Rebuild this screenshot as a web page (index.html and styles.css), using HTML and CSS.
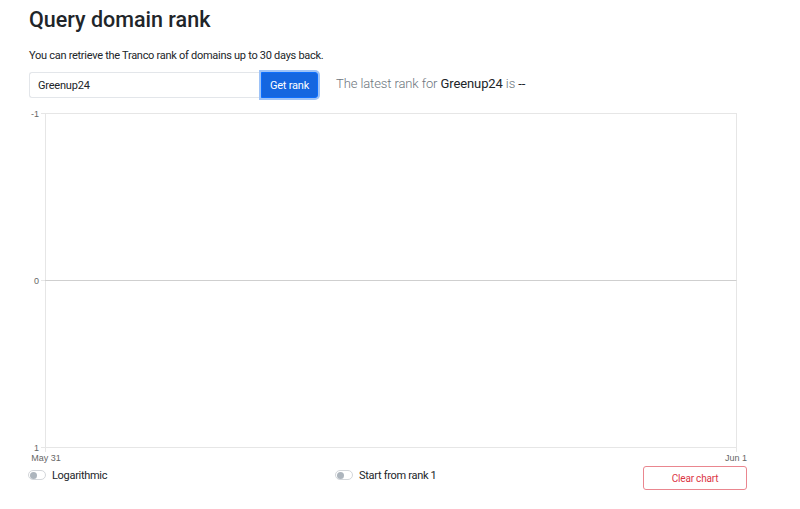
FILE: index.html
```html
<!DOCTYPE html>
<html>
<head>
<meta charset="utf-8">
<link rel="stylesheet" href="styles.css">
</head>
<body>
<div class="page">
  <h2 class="title">Query domain rank</h2>
  <p class="intro">You can retrieve the Tranco rank of domains up to 30 days back.</p>
  <div class="row">
    <div class="col">
      <div class="input-group">
        <input class="domain" type="text" value="Greenup24">
        <button class="btn-primary">Get rank</button>
      </div>
    </div>
    <div class="col">
      <p class="latest">The latest rank for <span class="dom">Greenup24</span> is <span class="dom">--</span></p>
    </div>
  </div>
</div>
<svg class="chart" width="780" height="356" viewBox="0 108 780 356">
  <g stroke="#e6e6e6" stroke-width="1" fill="none">
    <line x1="45.5" y1="113.5" x2="736.5" y2="113.5"/>
    <line x1="45.5" y1="447.5" x2="736.5" y2="447.5"/>
    <line x1="45.5" y1="113" x2="45.5" y2="452"/>
    <line x1="736.5" y1="113" x2="736.5" y2="452"/>
    <line x1="41" y1="113.5" x2="45" y2="113.5"/>
    <line x1="41" y1="447.5" x2="45" y2="447.5"/>
    <line x1="41" y1="280.5" x2="45" y2="280.5"/>
  </g>
  <line x1="45" y1="280.5" x2="736.5" y2="280.5" stroke="#cfcfcf" stroke-width="1"/>
  <g class="ticks" fill="#666" font-size="9" text-anchor="end">
    <text x="39" y="117">-1</text>
    <text x="39" y="284">0</text>
    <text x="39" y="451">1</text>
  </g>
  <g class="ticks" fill="#666" font-size="9" text-anchor="middle">
    <text x="46" y="461">May 31</text>
    <text x="736" y="461">Jun 1</text>
  </g>
</svg>
<div class="page">
  <div class="row bottom">
    <div class="col">
      <label class="switch"><span class="toggle"><span class="knob"></span></span>Logarithmic</label>
    </div>
    <div class="col">
      <label class="switch"><span class="toggle"><span class="knob"></span></span>Start from rank 1</label>
    </div>
    <div class="col">
      <button class="btn-danger">Clear chart</button>
    </div>
  </div>
</div>
</body>
</html>
```
FILE: styles.css
```css
* { box-sizing: border-box; }
html, body {
  margin: 0;
  padding: 0;
  background: #fff;
  color: #212529;
  font-family: Roboto, "Open Sans", sans-serif;
  font-size: 11px;
  letter-spacing: -0.25px;
}
.page {
  padding-left: 29px;
}
.title {
  margin: 0;
  padding-top: 6px;
  font-size: 21.5px;
  font-weight: 500;
  line-height: 28px;
  letter-spacing: 0;
}
.intro {
  margin: 14px 0 0;
  font-size: 11px;
  line-height: 16px;
  letter-spacing: -0.28px;
}
.row {
  display: grid;
  grid-template-columns: 307px 307px 1fr;
  width: 740px;
}
.input-group {
  margin-top: 8px;
  display: flex;
  width: 289px;
  height: 26px;
}
.domain {
  flex: 1;
  min-width: 0;
  height: 26px;
  border: 1px solid #e3e6ea;
  border-right: none;
  border-radius: 3px 0 0 3px;
  padding: 0 8px;
  font-family: inherit;
  font-size: 11px;
  letter-spacing: -0.2px;
  color: #212529;
  outline: none;
}
.btn-primary {
  width: 57px;
  height: 26px;
  border: 1px solid #0d6efd;
  background: #1466e0;
  color: #fff;
  border-radius: 0 3px 3px 0;
  font-family: inherit;
  font-size: 11px;
  letter-spacing: -0.2px;
  padding: 0;
  box-shadow: 0 0 0 2px #9ec3f7;
}
.latest {
  margin: 11px 0 0;
  font-size: 13px;
  font-weight: 300;
  color: #6c757d;
  line-height: 18px;
  letter-spacing: -0.1px;
}
.latest .dom {
  color: #212529;
  font-weight: 400;
}
.chart {
  display: block;
  margin-top: 10px;
}
.ticks text {
  font-family: "Liberation Sans", Arial, sans-serif;
  letter-spacing: 0;
}
.bottom {
  align-items: start;
}
.switch {
  display: flex;
  align-items: center;
  height: 22px;
  gap: 6px;
  font-size: 11px;
  letter-spacing: -0.3px;
  color: #212529;
}
.toggle {
  display: inline-flex;
  align-items: center;
  width: 18px;
  height: 10px;
  margin-left: -1px;
  border: 1px solid #d3d6da;
  border-radius: 6px;
  padding-left: 1px;
}
.knob {
  width: 7px;
  height: 7px;
  border-radius: 50%;
  background: #adb5bd;
}
.btn-danger {
  margin-top: 2px;
  width: 104px;
  height: 24px;
  border: 1px solid #ea868f;
  border-radius: 3px;
  background: #fff;
  color: #dc3545;
  font-family: inherit;
  font-size: 10px;
  letter-spacing: -0.2px;
  padding: 0;
}
```
